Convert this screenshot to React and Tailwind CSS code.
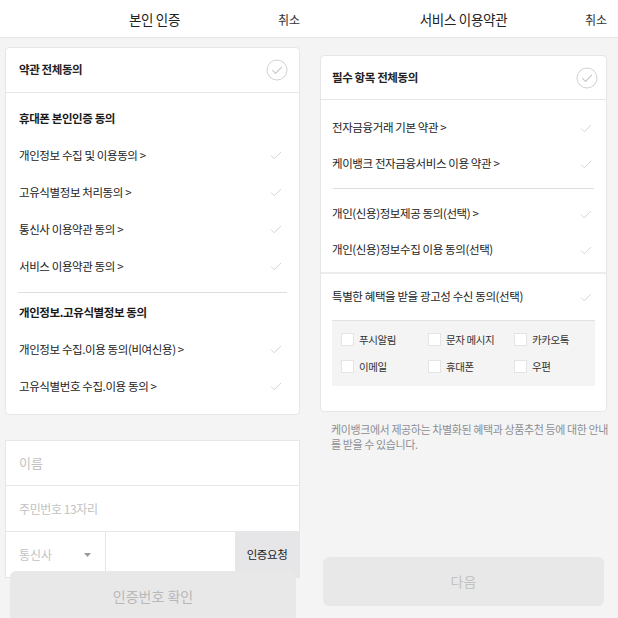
const font = { fontFamily: '"Noto Sans CJK KR", "Noto Sans", sans-serif' };

function Check() {
  return (
    <svg width="12" height="9" viewBox="0 0 12 9" fill="none">
      <path d="M1 4.5 L4.3 7.8 L11 1" stroke="#d6d6d6" strokeWidth="1" />
    </svg>
  );
}

function CircleCheck() {
  return (
    <svg width="22" height="22" viewBox="0 0 22 22" fill="none">
      <circle cx="11" cy="11" r="10" stroke="#d2d2d2" strokeWidth="1" />
      <path d="M6.3 11.2 L9.6 14.4 L15.8 7.8" stroke="#c8c8c8" strokeWidth="1.1" />
    </svg>
  );
}

function Header({ title, pr }) {
  return (
    <div className="h-[38px] shrink-0 bg-white border-b border-[#e6e6e6] grid grid-cols-[1fr_auto_1fr] items-center">
      <div />
      <div className="text-[13.5px] text-[#222] tracking-[-0.3px] pt-[2px]">{title}</div>
      <div className={`text-[12px] text-[#333] justify-self-end pt-[2px] ${pr}`}>취소</div>
    </div>
  );
}

function Row({ label, h = 'h-[37px]', pr = 'pr-[17px]' }) {
  return (
    <div className={`${h} flex items-center justify-between ${pr}`}>
      <span className="text-[11.5px] text-[#222] tracking-[-0.4px]">{label}</span>
      <Check />
    </div>
  );
}

const leftA = ['개인정보 수집 및 이용동의 >', '고유식별정보 처리동의 >', '통신사 이용약관 동의 >', '서비스 이용약관 동의 >'];
const leftB = ['개인정보 수집.이용 동의(비여신용) >', '고유식별번호 수집.이용 동의 >'];
const channels = ['푸시알림', '문자 메시지', '카카오톡', '이메일', '휴대폰', '우편'];

function LeftPanel() {
  return (
    <div className="w-[309px] h-[618px] flex flex-col bg-[#f4f4f4] overflow-hidden">
      <Header title="본인 인증" pr="pr-[9px]" />
      <div className="shrink-0 ml-[5px] mr-[9px] mt-[9px] bg-white border border-[#e6e6e6] rounded-[4px]">
        <div className="h-[45px] flex items-center justify-between pl-[13px] pr-[11px] border-b border-[#e6e6e6]">
          <span className="text-[11.5px] font-semibold text-[#222] tracking-[-0.4px]">약관 전체동의</span>
          <CircleCheck />
        </div>
        <div className="pl-[13px] pt-[7px] pb-[7px]">
          <div className="h-[37px] flex items-center text-[11.5px] font-bold text-[#1a1a1a] tracking-[-0.4px]">휴대폰 본인인증 동의</div>
          {leftA.map((t) => (
            <Row key={t} label={t} />
          ))}
        </div>
        <div className="mx-[12px] border-t border-[#dedede]" />
        <div className="pl-[13px] pt-[1px] pb-[9px]">
          <div className="h-[37px] flex items-center text-[11.5px] font-bold text-[#1a1a1a] tracking-[-0.4px]">개인정보.고유식별정보 동의</div>
          {leftB.map((t) => (
            <Row key={t} label={t} />
          ))}
        </div>
      </div>
      <div className="shrink-0 ml-[5px] mr-[9px] mt-[25px] bg-white border border-[#e6e6e6]">
        <div className="h-[45px] flex items-center pl-[13px] border-b border-[#e6e6e6] text-[13px] text-[#c2c2c2]">이름</div>
        <div className="h-[46px] flex items-center pl-[13px] border-b border-[#e6e6e6] text-[12px] text-[#c2c2c2] tracking-[-0.4px]">주민번호 13자리</div>
        <div className="h-[45px] flex">
          <div className="w-[100px] flex items-center justify-between pl-[13px] pr-[14px] border-r border-[#e6e6e6]">
            <span className="text-[12px] text-[#c2c2c2]">통신사</span>
            <svg width="7" height="4" viewBox="0 0 7 4"><path d="M0 0 H7 L3.5 4 Z" fill="#9a9a9a" /></svg>
          </div>
          <div className="flex-1" />
          <div className="w-[64px] bg-[#e6e6e8] flex items-center justify-center text-[11.5px] text-[#222] tracking-[-0.4px]">인증요청</div>
        </div>
      </div>
      <div className="shrink-0 ml-[10px] mr-[13px] -mt-[7px] h-[50px] rounded-[6px] bg-[#e8e8e8] flex items-center justify-center text-[14px] text-[#b8b8b8]">
        인증번호 확인
      </div>
    </div>
  );
}

function RightPanel() {
  return (
    <div className="w-[309px] h-[618px] flex flex-col bg-[#f4f4f4] overflow-hidden">
      <Header title="서비스 이용약관" pr="pr-[11px]" />
      <div className="shrink-0 mx-[11px] mt-[17px] bg-white border border-[#e6e6e6] rounded-[4px]">
        <div className="h-[44px] flex items-center justify-between pl-[11px] pr-[8px] border-b border-[#e6e6e6]">
          <span className="text-[11.5px] font-semibold text-[#222] tracking-[-0.4px]">필수 항목 전체동의</span>
          <CircleCheck />
        </div>
        <div className="pl-[11px] pt-[10px]">
          <Row label="전자금융거래 기본 약관 >" h="h-[36px]" pr="pr-[14px]" />
          <Row label="케이뱅크 전자금융서비스 이용 약관 >" h="h-[36px]" pr="pr-[14px]" />
        </div>
        <div className="mx-[12px] mt-[6px] border-t border-[#dedede]" />
        <div className="pl-[11px] pt-[7px] pb-[4px]">
          <Row label="개인(신용)정보제공 동의(선택) >" h="h-[36px]" pr="pr-[14px]" />
          <Row label="개인(신용)정보수집 이용 동의(선택)" h="h-[36px]" pr="pr-[14px]" />
        </div>
        <div className="border-t-2 border-[#ececec]" />
        <div className="pl-[11px] pt-[5px]">
          <Row label="특별한 혜택을 받을 광고성 수신 동의(선택)" h="h-[36px]" pr="pr-[14px]" />
        </div>
        <div className="ml-[11px] mr-[11px] mt-[5px] mb-[25px] bg-[#f4f4f4] border-t border-[#e2e2e2] pl-[9px] pt-[12px] pb-[13px] grid grid-cols-[87px_86px_1fr] gap-y-[14px]">
          {channels.map((c) => (
            <div key={c} className="flex items-center gap-[5px] h-[13px]">
              <span className="w-[13px] h-[13px] bg-white border border-[#e4e4e4]" />
              <span className="text-[10.5px] text-[#333] tracking-[-0.4px]">{c}</span>
            </div>
          ))}
        </div>
      </div>
      <p className="shrink-0 ml-[22px] mr-[10px] mt-[10px] text-[11px] leading-[15px] text-[#8d8f94] tracking-[-0.4px]">
        케이뱅크에서 제공하는 차별화된 혜택과 상품추천 등에 대한 안내를 받을 수 있습니다.
      </p>
      <div className="mt-auto mb-[12px] ml-[14px] mr-[14px] h-[49px] shrink-0 rounded-[6px] bg-[#e8e8e8] flex items-center justify-center text-[14px] text-[#c2c2c2]">
        다음
      </div>
    </div>
  );
}

export default function App() {
  return (
    <div className="w-[618px] h-[618px] flex bg-[#f4f4f4]" style={font}>
      <LeftPanel />
      <RightPanel />
    </div>
  );
}
